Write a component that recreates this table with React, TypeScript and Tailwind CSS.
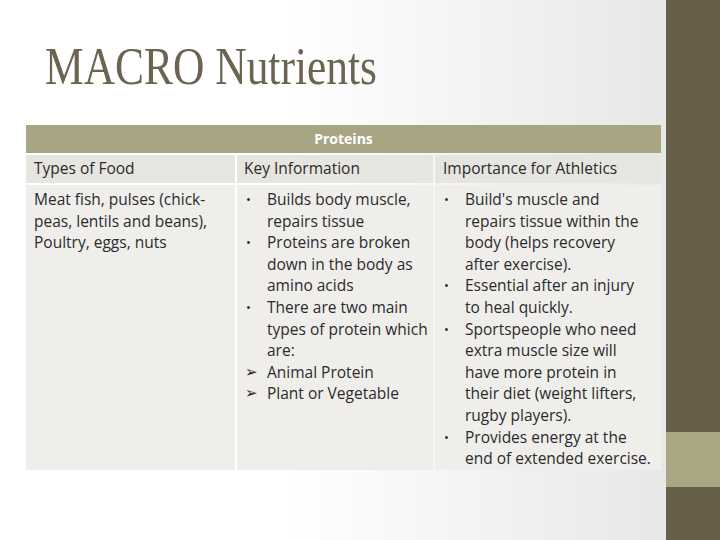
import React from "react";

const keyInfo: { mark: string; lines: string[] }[] = [
    { mark: "•", lines: ["Builds body muscle,", "repairs tissue"] },
    { mark: "•", lines: ["Proteins are broken", "down in the body as", "amino acids"] },
    { mark: "•", lines: ["There are two main", "types of protein which", "are:"] },
    { mark: "➢", lines: ["Animal Protein"] },
    { mark: "➢", lines: ["Plant or Vegetable"] },
];

const athletics: { mark: string; lines: string[] }[] = [
    { mark: "•", lines: ["Build's muscle and", "repairs tissue within the", "body (helps recovery", "after exercise)."] },
    { mark: "•", lines: ["Essential after an injury", "to heal quickly."] },
    { mark: "•", lines: ["Sportspeople who need", "extra muscle size will", "have more protein in", "their diet (weight lifters,", "rugby players)."] },
    { mark: "•", lines: ["Provides energy at the", "end of extended exercise."] },
];

function BulletList({ items }: { items: { mark: string; lines: string[] }[] }) {
    return (
        <div className="flex flex-col">
            {items.map((item, i) => (
                <div key={i} className="flex">
                    <span
                        className={
                            item.mark === "•"
                                ? "w-[22px] shrink-0 pl-[1px] text-[13px]"
                                : "w-[22px] shrink-0 text-[15px] font-['DejaVu_Sans'] text-[#222]"
                        }
                    >
                        {item.mark}
                    </span>
                    <div className="flex flex-col">
                        {item.lines.map((l, j) => (
                            <span key={j} className="whitespace-nowrap">{l}</span>
                        ))}
                    </div>
                </div>
            ))}
        </div>
    );
}

export default function App() {
    return (
        <div className="w-[720px] h-[540px] flex overflow-hidden bg-gradient-to-r from-white from-40% to-[#e4e4e4]">
            <div className="flex-1 flex flex-col">
                <h1 className="h-[125px] pl-[45px] pt-[38px] font-['Liberation_Serif',serif] text-[53px] leading-[56px] text-[#6a6450] whitespace-nowrap">
                    <span className="inline-block origin-left scale-x-[0.82]">MACRO Nutrients</span>
                </h1>
                <div className="ml-[26px] w-[635px] flex flex-col font-['Open_Sans',sans-serif] text-[15.5px] leading-[21.6px] text-[#2b2b2b]">
                    <div className="h-[28px] bg-[#a8a585] flex items-center justify-center text-white font-bold text-[14px] mb-[2px]">
                        Proteins
                    </div>
                    <div className="grid grid-cols-[209px_196px_226px] gap-[2px]">
                        <div className="h-[28px] bg-[#e6e5e0] pl-[8px] flex items-center">Types of Food</div>
                        <div className="h-[28px] bg-[#e6e5e0] pl-[7px] flex items-center">Key Information</div>
                        <div className="h-[28px] bg-[#e6e5e0] pl-[8px] flex items-center">Importance for Athletics</div>
                        <div className="h-[285px] bg-[#efeeeb] pl-[8px] pt-[4px]">
                            <span className="block whitespace-nowrap">Meat fish, pulses (chick-</span>
                            <span className="block whitespace-nowrap">peas, lentils and beans),</span>
                            <span className="block whitespace-nowrap">Poultry, eggs, nuts</span>
                        </div>
                        <div className="h-[285px] bg-[#efeeeb] pl-[8px] pt-[4px]">
                            <BulletList items={keyInfo} />
                        </div>
                        <div className="h-[285px] bg-[#efeeeb] pl-[8px] pt-[4px]">
                            <BulletList items={athletics} />
                        </div>
                    </div>
                </div>
            </div>
            <div className="w-[54px] flex flex-col">
                <div className="h-[432px] bg-[#675f4a]" />
                <div className="h-[55px] bg-[#a9a682]" />
                <div className="flex-1 bg-[#675f4a]" />
            </div>
        </div>
    );
}
